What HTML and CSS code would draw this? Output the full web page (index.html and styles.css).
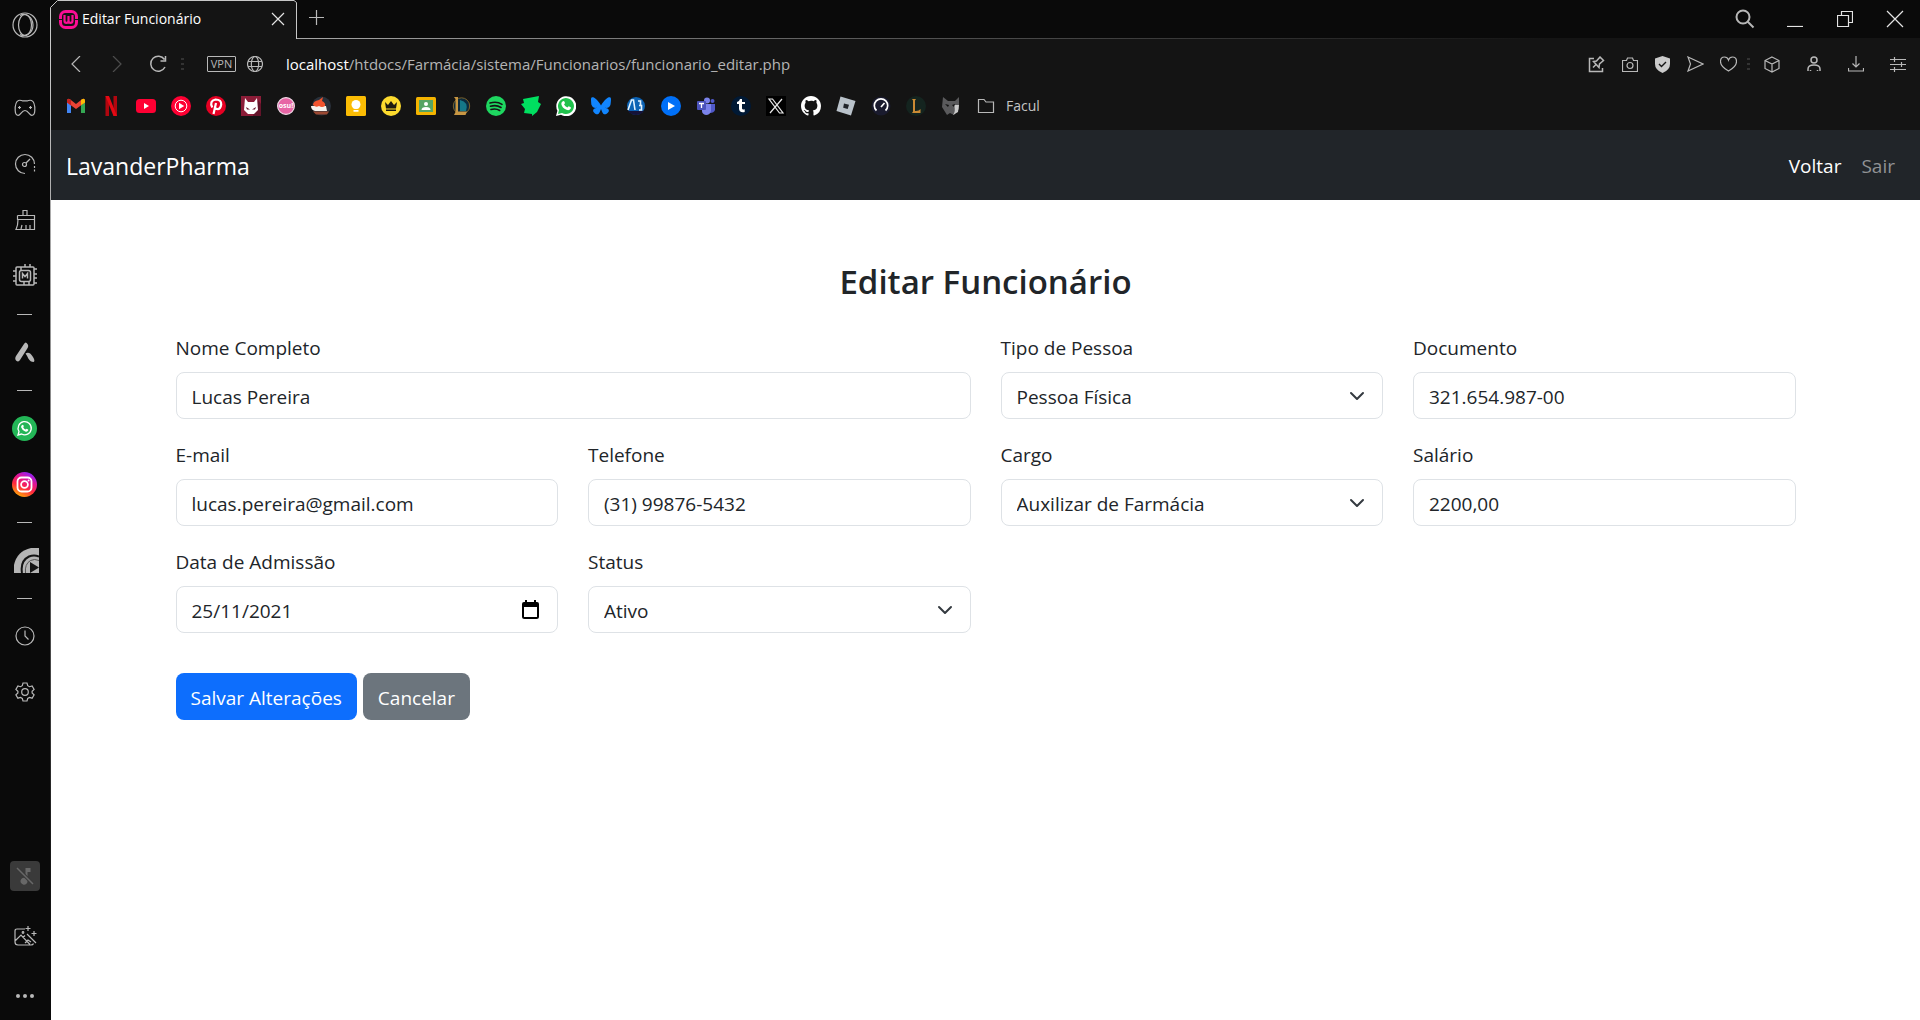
FILE: index.html
```html
<!DOCTYPE html>
<html lang="pt-BR">
<head>
<meta charset="utf-8">
<meta name="viewport" content="width=device-width, initial-scale=1">
<title>Editar Funcionário</title>
<link rel="stylesheet" href="styles.css">
</head>
<body>
<div class="browser">
  <aside class="sidebar">
    <button class="side-logo" aria-label="Opera"><svg width="26" height="26" viewBox="0 0 26 26" class="line"><circle cx="13" cy="13" r="12"/><ellipse cx="13" cy="13" rx="6.500" ry="10.500"/><path d="M8 3.500c5-3 13 1 13 9.500s-8 12.500-13 9.500"/></svg></button>
    <nav class="side-main" aria-label="Barra lateral">
      <button class="side-btn" aria-label="Jogos"><svg width="22" height="18" viewBox="0 0 22 18" class="line"><path d="M4.500 1.500c2-.8 3 .3 4 .3h5c1 0 2-1.100 4-.3 2.500 1 3.500 5 3.300 10-.1 3-1.300 4.800-3 4.800-2.300 0-3.300-4.800-6.800-4.800s-4.500 4.800-6.800 4.800c-1.700 0-2.900-1.800-3-4.800-.2-5 .8-9 3.300-10z"/><path d="M5.500 7v3M4 8.500h3M15 8.500h3M16.500 7v3"/></svg></button>
      <button class="side-btn" aria-label="Limitadores"><svg width="22" height="22" viewBox="0 0 22 22" class="line"><path d="M11 20.500A9.500 9.500 0 1 1 20.500 11"/><circle cx="10.500" cy="11.500" r="2"/><path d="m12 10 4-4"/><path d="M20.500 13v7" stroke-dasharray="2 1.500"/></svg></button>
      <button class="side-btn" aria-label="Limpeza"><svg width="22" height="22" viewBox="0 0 22 22" class="line"><path d="M9 6.500V1.500h4v5M3.500 6.500h17V20.500H2q2-4 2-10M3.500 6.500v4h17M7 20l1-4M12 20v-4M16 20v-4"/></svg></button>
      <button class="side-btn" aria-label="Mods"><svg width="24" height="24" viewBox="0 0 24 24" class="line thicker"><rect x="3" y="3" width="18" height="18" rx="1"/><rect x="6.500" y="6.500" width="11" height="11" rx="2"/><path d="M9.500 14.500v-5l2.500 3 2.500-3v5M8 3v3M12 0v3M17 0v3M16 18v3M11 18v3M0 7h3M0 12h3M0 17h3M21 5h3M21 10h3M21 14h3M21 19h3"/></svg></button>
      <span class="side-dash"></span>
      <button class="side-btn" aria-label="Aria"><svg width="20" height="20" viewBox="0 0 20 20" class="solid"><path d="M9 2q1.800-3 3.500 0 1.500 2-.2 4.500L5 18q-1.500 2.500-4 .5-1.500-2 0-4.500zM10.500 11.500q4-2.500 7.500 3.500 2.500 4 .5 5-3 0-5.200-3.500-1-2.500-2.800-5z"/></svg></button>
      <span class="side-dash"></span>
      <button class="side-btn" aria-label="WhatsApp"><svg width="25" height="25" viewBox="0 0 25 25"><circle cx="12.500" cy="12.500" r="12.500" fill="#23b657"/><path d="m6 19 1-3.500a6.600 6.600 0 1 1 2.600 2.500z" fill="none" stroke="#fff" stroke-width="1.300"/><path d="M9.800 9.300q1.300-1.500 1.900.6.200.8-.5 1.300.8 1.600 2.500 2.400l.9-.8q2.200.7 1.700 1.500-1 1.900-3 1.200-3.300-1.200-4.200-4.200-.2-1.200.7-2z" fill="#fff"/></svg></button>
      <button class="side-btn" aria-label="Instagram"><svg width="25" height="25" viewBox="0 0 25 25"><defs><linearGradient id="ig" x1=".2" y1="1" x2=".7" y2="0"><stop offset="0" stop-color="#ffb900"/><stop offset=".4" stop-color="#ff2a3d"/><stop offset=".7" stop-color="#e01594"/><stop offset="1" stop-color="#8a22ff"/></linearGradient></defs><circle cx="12.500" cy="12.500" r="12.500" fill="url(#ig)"/><g fill="none" stroke="#fff" stroke-width="1.800"><rect x="5.500" y="5.500" width="14" height="14" rx="4"/><circle cx="12.500" cy="12.500" r="3.400"/></g><circle cx="16.600" cy="8.400" r="1" fill="#fff"/></svg></button>
      <span class="side-dash"></span>
      <button class="side-btn player" aria-label="Player"><svg width="25" height="25" viewBox="0 0 25 25"><path d="M0 25V17Q3 3 17 0h8v25z" fill="#b5b5b5"/><path d="M8 25Q6 13 15 8.500q5-2 10 0" fill="none" stroke="#141414" stroke-width="2"/><path d="M11.500 25q-1-9 5-12.500 4-2 8.500 0" fill="none" stroke="#555" stroke-width="1"/><path d="M16 14v11l9-5.500z" fill="#141414"/></svg></button>
      <span class="side-dash"></span>
      <button class="side-btn" aria-label="Histórico"><svg width="20" height="20" viewBox="0 0 20 20" class="line"><circle cx="10" cy="10" r="9"/><path d="M10 4.500V10l3.500 3.500"/></svg></button>
      <button class="side-btn" aria-label="Configurações"><svg width="20" height="20" viewBox="0 0 20 20" class="line"><circle cx="10" cy="10" r="3.300"/><path d="M8 1h4l.7 2.700 1.800 1 2.600-.8 2 3.500-2 1.800v1.800l2 1.800-2 3.400-2.600-.7-1.800 1L12 19H8l-.7-2.500-1.800-1-2.600.7-2-3.400 2-1.800V9.200l-2-1.800 2-3.500 2.600.8 1.800-1z"/></svg></button>
    </nav>
    <div class="side-bottom">
      <button class="side-tool muted" aria-label="Música desligada"><svg width="18" height="18" viewBox="0 0 18 18"><path d="M9.500 12V1h5v4h-3v9a3.500 3.500 0 1 1-2-3z" fill="#686868"/><path d="m1 1 16 16" stroke="#3a3a3a" stroke-width="3.500"/><path d="m1 1 16 16" stroke="#686868" stroke-width="1.500"/></svg></button>
      <button class="side-tool" aria-label="Papel de parede"><svg width="24" height="22" viewBox="0 0 24 22" class="line"><path d="M12 4H4Q2 4 2 6v11q0 3 3 3h13q2 0 2.500-1.500M2 16l6-6 9 9.500M10 12.500l2-2M12 18l3-3 3 2M14 9l9 9"/><circle cx="10" cy="7.500" r=".8"/><path d="M15 1v5M12.500 3.500h5M21 6v5M18.500 8.500h5"/></svg></button>
      <button class="side-tool" aria-label="Mais"><svg width="18" height="4" viewBox="0 0 18 4" class="solid"><circle cx="2" cy="2" r="2"/><circle cx="9" cy="2" r="2"/><circle cx="16" cy="2" r="2"/></svg></button>
    </div>
  </aside>

  <div class="window">
    <header class="tabstrip">
      <div class="tab">
        <svg class="tab-outline" width="248" height="39" viewBox="0 0 248 39"><path d="M.5 39V7.500l7-7H244l2.500 2V39" fill="#141414" stroke="#c8c8c8"/></svg>
        <svg class="tab-icon" width="19" height="19" viewBox="0 0 19 19"><rect x="1.500" y="1.500" width="16" height="16" rx="5" fill="none" stroke="#fb0d94" stroke-width="3"/><path d="M0 9.500h3M16 9.500h3" stroke="#141414"/><path d="M5.500 5v6q0 1.800 2 1.800t2-1.800V6M9.500 11q0 1.800 2 1.800t2-1.800V5" fill="none" stroke="#fb0d94" stroke-width="2.200"/></svg>
        <span class="tab-title">Editar Funcionário</span>
        <button class="tab-close" aria-label="Fechar aba"><svg width="14" height="14" viewBox="0 0 14 14" class="line bright"><path d="m1 1 12 12M13 1 1 13"/></svg></button>
      </div>
      <button class="new-tab" aria-label="Nova aba"><svg width="15" height="15" viewBox="0 0 15 15" class="line"><path d="M7.500 0v15M0 7.500h15"/></svg></button>
      <div class="window-buttons">
        <button aria-label="Pesquisar"><svg width="20" height="20" viewBox="0 0 20 20" class="line thick"><circle cx="8" cy="8" r="6.500"/><path d="m12.500 12.500 6 6"/></svg></button>
        <button aria-label="Minimizar"><svg width="16" height="16" viewBox="0 0 16 16" class="line bright"><path d="M0 15.500h16"/></svg></button>
        <button aria-label="Restaurar"><svg width="16" height="16" viewBox="0 0 16 16" class="line bright"><path d="M.5 4.500h11v11H.5zM4.500 4.500v-4h11v11h-4"/></svg></button>
        <button aria-label="Fechar"><svg width="18" height="18" viewBox="0 0 18 18" class="line bright"><path d="m1 1 16 16M17 1 1 17"/></svg></button>
      </div>
    </header>

    <div class="toolbar">
      <button class="nav-btn" aria-label="Voltar página"><svg width="10" height="16" viewBox="0 0 10 16" class="line"><path d="M9 0 1 8l8 8"/></svg></button>
      <button class="nav-btn dim" aria-label="Avançar"><svg width="10" height="16" viewBox="0 0 10 16" class="line"><path d="m1 0 8 8-8 8"/></svg></button>
      <button class="nav-btn" aria-label="Recarregar"><svg width="18" height="18" viewBox="0 0 18 18" class="line thicker"><path d="M15.500 4.500A7.500 7.500 0 1 0 16 12M16.500 1v5h-5"/></svg></button>
      <span class="dots"></span>
      <span class="vpn">VPN</span>
      <svg class="globe line" width="16" height="16" viewBox="0 0 16 16"><circle cx="8" cy="8" r="7.500"/><ellipse cx="8" cy="8" rx="3.700" ry="7.500"/><path d="M1 5.500h14M1 10.500h14"/></svg>
      <p class="url"><b>localhost</b>/htdocs/Farmácia/sistema/Funcionarios/funcionario_editar.php</p>
      <button class="act-btn" aria-label="Fixar"><svg width="17" height="17" viewBox="0 0 17 17" class="line thicker"><path d="M6 2.500H1.500v13h13V12M5 11.500l3-3M5.500 5.500l5.500 6 .5-3.500 4-3.500L12 1 8.500 5z"/></svg></button>
      <button class="act-btn" aria-label="Captura"><svg width="16" height="15" viewBox="0 0 16 15" class="line"><path d="M.5 3.500h4l1-2.500h5l1 2.500h4v11H.5z"/><circle cx="8" cy="8.500" r="3"/></svg></button>
      <button class="act-btn" aria-label="Proteção"><svg width="15" height="17" viewBox="0 0 15 17"><path d="M7.500 0 15 2.500V8q0 6-7.500 9Q0 14 0 8V2.500z" fill="#cbcbcb"/><path d="m4 8 2.500 2.500L11 6" fill="none" stroke="#141414" stroke-width="1.400"/></svg></button>
      <button class="act-btn" aria-label="Enviar"><svg width="17" height="16" viewBox="0 0 17 16" class="line"><path d="m1 1 15 7L1 15l2.500-7z"/></svg></button>
      <button class="act-btn" aria-label="Favoritar"><svg width="17" height="16" viewBox="0 0 17 16" class="line"><path d="M8.500 15Q.5 10.500.5 5.500.5 1 4.500 1q3 0 4 3 1-3 4-3 4 0 4 4.500 0 5-8 9.500z"/></svg></button>
      <span class="dots narrow"></span>
      <button class="menu-btn" aria-label="Extensões"><svg width="16" height="17" viewBox="0 0 16 17" class="line"><path d="m8 1 7 3.500v8L8 16l-7-3.500v-8zM1 4.500 8 8l7-3.500M8 8v8"/></svg></button>
      <button class="menu-btn" aria-label="Perfil"><svg width="14" height="16" viewBox="0 0 14 16" class="line thicker"><circle cx="7" cy="4" r="3"/><path d="M1 15v-2q0-4 6-4t6 4v2M3.500 15v-1M10.500 15v-1"/></svg></button>
      <button class="menu-btn" aria-label="Downloads"><svg width="16" height="16" viewBox="0 0 16 16" class="line"><path d="M8 0v11M4.500 7.500 8 11l3.500-3.500M.5 12v3h15v-3"/></svg></button>
      <button class="menu-btn" aria-label="Configuração rápida"><svg width="16" height="16" viewBox="0 0 16 16" class="line"><path d="M0 3.500h16M0 8.500h16M0 13.500h16M4.500 1v5M11.500 6v5M4.500 11v5"/></svg></button>
    </div>

    <nav class="bookmarks" aria-label="Favoritos">
      <a href="#" aria-label="Gmail"><svg viewBox="0 0 20 20"><path d="M1 4.500V17h4V9z" fill="#4285f4"/><path d="M19 4.500V17h-4V9z" fill="#34a853"/><path d="M1 5q0-3 3-1.800L10 8l6-4.800Q19 2 19 5v1.500L10 13 1 6.500z" fill="#ea4335"/><path d="M15 4v5l4-2.500V5q0-3-3-1.800z" fill="#fbbc04"/><path d="M1 5v1.500L5 9.500V4Q1 1.500 1 5z" fill="#c5221f"/></svg></a>
      <a href="#" aria-label="Netflix"><svg viewBox="0 0 20 20"><path d="M4.500 0H8v20H4.500zM12.500 0H16v20h-3.500z" fill="#b1060f"/><path d="M4.500 0H8l8 20h-3.500z" fill="#e50914"/></svg></a>
      <a href="#" aria-label="YouTube"><svg viewBox="0 0 20 20"><rect y="3" width="20" height="14" rx="3.500" fill="#ff0033"/><path d="M8 7v6l5-3z" fill="#fff"/></svg></a>
      <a href="#" aria-label="YouTube Music"><svg viewBox="0 0 20 20"><circle cx="10" cy="10" r="10" fill="#ff0033"/><circle cx="10" cy="10" r="5.800" fill="none" stroke="#fff"/><path d="M8 6.800v6.400l5.200-3.200z" fill="#fff"/></svg></a>
      <a href="#" aria-label="Pinterest"><svg viewBox="0 0 20 20"><circle cx="10" cy="10" r="10" fill="#e60023"/><path d="M6.300 11.500Q3 5 9.500 3.500q6 0 5.700 5-.7 5-4.200 4.500-1.500-.3-1.600-1.400M10 7 7.500 18" fill="none" stroke="#fff" stroke-width="2.200"/></svg></a>
      <a href="#" aria-label="Gato"><svg viewBox="0 0 20 20"><path d="M0 0h20v20H0z" fill="#8c1d38"/><path d="m17 4 3 4v12h-8z" fill="#64142a"/><path d="m4 2 3 4h6l3-4 1 12-4 4H7l-4-4z" fill="#fff"/><path d="m5 11 4 2.500H6zM15 11l-4 2.500h3z" fill="#64142a"/></svg></a>
      <a href="#" aria-label="osu!"><svg viewBox="0 0 20 20"><circle cx="10" cy="10" r="8.400" fill="#e765a5" stroke="#eedae5" stroke-width="1.200"/><text x="10" y="12" class="osu">osu!</text></svg></a>
      <a href="#" aria-label="Receitas"><svg viewBox="0 0 20 20"><circle cx="10.500" cy="10" r="9.500" fill="#29303a"/><path d="M0 10h15l1 5H4q-4-1-4-5z" fill="#f5f2ee"/><path d="M2 9q0-4 6-5l4-3-1 4q4 2 3 5-3 2-6 0-3 2-6-1z" fill="#f0532e"/><path d="M2 15.500h16l-2 3H5z" fill="#9c4932"/></svg></a>
      <a href="#" aria-label="Google Keep"><svg viewBox="0 0 20 20"><rect width="20" height="20" rx="1.500" fill="#fbbc04"/><circle cx="10" cy="8.500" r="4.500" fill="#fff"/><path d="M7.500 10h5v2.500h-5zM7.500 14h5v1.700h-5z" fill="#fff"/></svg></a>
      <a href="#" aria-label="Coroa"><svg viewBox="0 0 20 20"><circle cx="10" cy="10" r="10" fill="#fddb2e"/><path d="m4 6 3 3 3-4 3 4 3-3-1 6.500H5zM5 13.500h10v1.500H5z" fill="#1c1a10"/></svg></a>
      <a href="#" aria-label="Google Classroom"><svg viewBox="0 0 20 20"><rect y="1" width="20" height="18" rx="1.500" fill="#f4b400"/><path d="M3 4h14v12H3z" fill="#57a464"/><circle cx="10" cy="8" r="2" fill="#fff"/><path d="M5.500 14q0-3 4.500-3t4.500 3z" fill="#fff"/></svg></a>
      <a href="#" aria-label="League of Legends"><svg viewBox="0 0 20 20"><circle cx="10.500" cy="10" r="8.200" fill="#0c2b3d" stroke="#7c6129"/><path d="M9 4q9 2 6 11H9z" fill="#157887"/><path d="M3 1h4v14.500h9L14.500 19H3l1.500-3V3z" fill="#c79643"/></svg></a>
      <a href="#" aria-label="Spotify"><svg viewBox="0 0 20 20"><circle cx="10" cy="10" r="10" fill="#1ed760"/><path d="M4 7q7-2 12 1.300M4.500 10.300q6-1.700 10.500 1.200M5 13.500q5-1.300 8.700 1" fill="none" stroke="#141414" stroke-width="1.600" stroke-linecap="round"/></svg></a>
      <a href="#" aria-label="Deezer"><svg viewBox="0 0 20 20"><path d="m2 3 16-3-1 6 3 2-4 8-5 4v-2l-8-1 1-4-4-5 3-1z" fill="#00e060"/></svg></a>
      <a href="#" aria-label="WhatsApp Web"><svg viewBox="0 0 20 20"><path d="m0 20 1.400-5.200A10 10 0 1 1 5 18.700z" fill="#fff"/><path d="m2 18 1-4a8 8 0 1 1 3 3z" fill="#1fc14c"/><path d="M6.500 5.500q1.800-1.300 2.400 1.300.1.900-.9 1.700 1.200 2 3.400 3l1.200-1.200q3 .8 2.200 2.200-1.600 2.500-4.300 1.300-4.500-1.800-5.200-5.800 0-1.700 1.200-2.500z" fill="#fff"/></svg></a>
      <a href="#" aria-label="Bluesky"><svg viewBox="0 0 20 20"><path d="M4.300 2.500C6.600 4.200 9 7.500 10 9.500c1-2 3.400-5.300 5.700-7 1.700-1.200 4.300-2.200 4.300.9 0 .7-.3 5-.6 5.700-.8 2.500-3 3.100-5.300 2.700 3.900.7 4.800 2.900 2.700 5-4 4.100-5.700-1-6.200-2.300L10 13l-.6 1.500C8.900 15.800 7.200 20.900 3.200 16.800c-2.100-2.100-1.200-4.300 2.700-5-2.300.4-4.500-.2-5.300-2.700C.3 8.400 0 4.100 0 3.400 0 .3 2.600 1.300 4.300 2.500z" fill="#1185fe"/></svg></a>
      <a href="#" aria-label="Animes"><svg viewBox="0 0 20 20"><circle cx="10" cy="10" r="9" fill="#0c63b5"/><path d="M2 15h16q-3 4-8 4t-8-4z" fill="#151238"/><path d="m2 14 3.500-10h2L9 14M12 5h2.500v4M13 9.500h2.500V14H13" fill="none" stroke="#e3f3ff" stroke-width="1.600"/></svg></a>
      <a href="#" aria-label="Player"><svg viewBox="0 0 20 20"><circle cx="10" cy="10" r="10" fill="#0070f8"/><path d="M7 6v8l7-4z" fill="#fff"/></svg></a>
      <a href="#" aria-label="Teams"><svg viewBox="0 0 20 20"><circle cx="11" cy="4.500" r="3" fill="#7b83eb"/><circle cx="16.500" cy="5" r="2" fill="#5059c9"/><path d="M14 8h5v6q-1 3-5 3z" fill="#5059c9"/><path d="M6 8h9v7q-1 4-5 4-4-1-4-4z" fill="#7b83eb"/><rect x="1" y="5" width="9" height="9" rx="1" fill="#4b53bc"/><path d="M3 7.500h5M5.500 7.500V12" stroke="#fff" stroke-width="1.300"/></svg></a>
      <a href="#" aria-label="Tumblr"><svg viewBox="0 0 20 20"><circle cx="10" cy="10" r="10" fill="#001935"/><path d="M8 8H6V6q2.500-.7 3-3h2v3h3v2h-3v4.500q.3 1.700 2.700.8V16Q8 17 8 12.500z" fill="#fff"/></svg></a>
      <a href="#" aria-label="X"><svg viewBox="0 0 20 20"><path d="M0 0h20v20H0z" fill="#000"/><path d="M3 3h3.500L17 17h-3.500zM16 3 4 17" fill="none" stroke="#e8e8e8" stroke-width="1.200"/></svg></a>
      <a href="#" aria-label="GitHub"><svg viewBox="0 0 16 16"><path fill="#fff" d="M8 0C3.580 0 0 3.580 0 8c0 3.540 2.290 6.530 5.470 7.590.4.070.55-.17.55-.38 0-.19-.01-.82-.01-1.490-2.010.37-2.530-.49-2.690-.94-.09-.23-.48-.94-.82-1.130-.28-.15-.68-.52-.01-.53.63-.01 1.080.58 1.230.82.72 1.210 1.870.87 2.330.66.07-.52.28-.87.51-1.070-1.780-.2-3.640-.89-3.640-3.950 0-.87.31-1.590.82-2.150-.08-.2-.36-1.020.08-2.120 0 0 .67-.21 2.200.82A7.600 7.600 0 0 1 8 3.860c.68 0 1.360.09 2 .27 1.530-1.040 2.200-.82 2.200-.82.44 1.100.16 1.920.08 2.120.51.56.82 1.270.82 2.150 0 3.070-1.870 3.750-3.650 3.950.29.25.54.73.54 1.480 0 1.070-.01 1.930-.01 2.200 0 .21.15.46.55.38A8 8 0 0 0 16 8c0-4.420-3.580-8-8-8z"/></svg></a>
      <a href="#" aria-label="Roblox"><svg viewBox="0 0 20 20"><path d="m4.500.5 15 4.500-4.500 14.500L.5 15z" fill="#b9c2ca"/><path d="m8 7.500 5 1.300L11.700 13l-4.500-1.200z" fill="#20242a"/></svg></a>
      <a href="#" aria-label="Speedtest"><svg viewBox="0 0 20 20"><circle cx="10" cy="10" r="9.500" fill="#1a1b2e"/><path d="M5.500 14.500a6.700 6.700 0 1 1 9 0M10 11l3.500-4" fill="none" stroke="#fff" stroke-width="1.700"/></svg></a>
      <a href="#" aria-label="Lolzinho"><svg viewBox="0 0 20 20"><circle cx="10" cy="10" r="10" fill="#14241f"/><path d="M6 3h4L9 4.500V15q4 .3 5.500-2v4H6l1-1.500v-11z" fill="#c98a34"/></svg></a>
      <a href="#" aria-label="Lobo"><svg viewBox="0 0 20 20"><path d="m2 1 5 4h7l4-4v12l-5 6-4-2-3 2-5-8z" fill="#5a5a5c"/><path d="M13 9h5l-1 7-5 3q3-4 1-10z" fill="#c9c9c9"/><path d="m4 8 4 1-1 2zM11 9l3-1-1 3z" fill="#111"/></svg></a>
      <a href="#" class="folder"><svg viewBox="0 0 20 20" class="line"><path d="M2.500 3.500H8l2 2.500h7.500v10.500h-15z"/></svg><span>Facul</span></a>
    </nav>

    <div class="page">
      <header class="navbar">
        <a href="#" class="brand">LavanderPharma</a>
        <nav class="navbar-links" aria-label="Navegação">
          <a href="#" class="active">Voltar</a>
          <a href="#">Sair</a>
        </nav>
      </header>
      <main class="container">
        <h2>Editar Funcionário</h2>
        <form>
          <div class="fields">
            <div class="field wide"><label for="nome">Nome Completo</label><input id="nome" type="text" value="Lucas Pereira"></div>
            <div class="field"><label for="tipo">Tipo de Pessoa</label><select id="tipo"><option>Pessoa Física</option><option>Pessoa Jurídica</option></select></div>
            <div class="field"><label for="documento">Documento</label><input id="documento" type="text" value="321.654.987-00"></div>
            <div class="field"><label for="email">E-mail</label><input id="email" type="email" value="lucas.pereira@gmail.com"></div>
            <div class="field"><label for="telefone">Telefone</label><input id="telefone" type="text" value="(31) 99876-5432"></div>
            <div class="field"><label for="cargo">Cargo</label><select id="cargo"><option>Auxilizar de Farmácia</option></select></div>
            <div class="field"><label for="salario">Salário</label><input id="salario" type="text" value="2200,00"></div>
            <div class="field"><label for="admissao">Data de Admissão</label>
              <div class="date"><input id="admissao" type="text" inputmode="numeric" value="25/11/2021"><button type="button" aria-label="Abrir calendário"><svg width="17" height="19" viewBox="0 0 17 19"><path d="M1 4v12.500q0 1.500 1.500 1.500h12q1.500 0 1.500-1.500V4" fill="none" stroke="#000" stroke-width="2"/><path d="M0 7V4q0-2 2-2h1V0h2v2h7V0h2v2h1q2 0 2 2v3z"/><path d="M2 7h13v10H2z" fill="#fff"/></svg></button></div></div>
            <div class="field"><label for="status">Status</label><select id="status"><option>Ativo</option><option>Inativo</option></select></div>
          </div>
          <div class="actions">
            <button type="submit" class="btn primary">Salvar Alterações</button>
            <button type="button" class="btn secondary">Cancelar</button>
          </div>
        </form>
      </main>
    </div>
  </div>
</div>
</body>
</html>
```
FILE: styles.css
```css
*, *::before, *::after { box-sizing: border-box; }

body {
  margin: 0;
  font-family: "Segoe UI", "Open Sans", "Noto Sans", sans-serif;
  font-size: 19px;
  line-height: 30px;
  color: #212529;
  background: #fff;
}

button {
  padding: 0;
  border: 0;
  background: none;
  font: inherit;
  color: inherit;
}

svg { display: block; flex: none; }
a { text-decoration: none; color: inherit; }

.line { fill: none; stroke: #b8b8b8; stroke-width: 1.2; }
.thicker { stroke-width: 1.5; }
.thick { stroke-width: 2; }
.bright { stroke: #e4e4e4; }
.solid { fill: #b8b8b8; }

.browser {
  display: grid;
  grid-template-columns: 51px 1fr;
  min-height: 100vh;
}

/* Sidebar */
.sidebar {
  position: relative;
  display: flex;
  flex-direction: column;
  padding-right: 2px;
  background: #0a0a0a;
}

.sidebar::after {
  content: "";
  position: absolute;
  inset: 8px 0 0 auto;
  width: 1px;
  background: linear-gradient(#d0d0d0, #888 40%, #1a1a1a 82%, #0a0a0a);
}

.side-logo, .side-btn, .side-tool {
  display: grid;
  place-items: center;
}

.side-logo { height: 50px; }
.side-main { display: flex; flex-direction: column; padding-top: 30px; }
.side-btn { height: 56px; }
.player { padding-left: 3px; }
.side-dash { height: 20px; display: grid; place-items: center; }
.side-dash::before { content: ""; width: 15px; height: 1px; background: #b8b8b8; }

.side-bottom {
  margin-top: auto;
  display: flex;
  flex-direction: column;
  align-items: center;
  gap: 30px;
  padding-bottom: 9px;
}

.side-tool { width: 30px; height: 30px; }
.muted { background: #3a3a3a; border-radius: 4px; }

/* Browser chrome */
.window {
  display: flex;
  flex-direction: column;
  min-width: 0;
}

.tabstrip {
  display: flex;
  height: 39px;
  background: linear-gradient(90deg, #c8c8c8, #555 45%, #141414 80%) bottom / 100% 1px no-repeat #0a0a0a;
}

.tab {
  position: relative;
  display: flex;
  align-items: center;
  width: 246px;
  height: 38px;
  padding: 0 12px 0 8px;
}

.tab-outline { position: absolute; left: -1px; top: 0; }
.tab-icon, .tab-title, .tab-close { position: relative; }
.tab-title { margin-left: 4px; font-size: 14px; color: #fff; line-height: 38px; }
.tab-close { margin-left: auto; }
.new-tab { width: 38px; padding-left: 12px; height: 35px; }

.window-buttons { display: flex; margin-left: auto; }
.window-buttons button { width: 50px; height: 38px; display: grid; place-items: center; }

.toolbar {
  display: flex;
  align-items: center;
  height: 50px;
  padding: 0 1px 0 4px;
  background: #141414;
}

.nav-btn, .act-btn, .menu-btn { display: grid; place-items: center; height: 40px; }
.nav-btn { width: 41px; }
.act-btn { width: 33px; }
.menu-btn { width: 42px; }
.dim { opacity: 0.35; }

.dots {
  width: 8px;
  height: 12px;
  background: repeating-linear-gradient(#333 0 2px, transparent 2px 5px) center / 3px 12px no-repeat;
}

.dots.narrow { width: 6px; }

.vpn {
  width: 29px;
  height: 16px;
  margin: 0 11px 0 21px;
  border: 1px solid #b8b8b8;
  border-radius: 1px;
  color: #b8b8b8;
  font-size: 11px;
  line-height: 14px;
  text-align: center;
}

.url {
  flex: 1;
  min-width: 0;
  margin: 0 0 0 23px;
  font-size: 15px;
  color: #b4b4b4;
  white-space: nowrap;
  overflow: hidden;
}

.url b { font-weight: 400; color: #fff; }

.bookmarks {
  display: flex;
  align-items: center;
  gap: 15px;
  height: 41px;
  padding: 0 15px 7px;
  background: #141414;
}

.bookmarks a, .bookmarks svg { height: 20px; }
.bookmarks svg { width: 20px; }

.folder {
  display: flex;
  align-items: center;
  gap: 10px;
  font-size: 14px;
  color: #c4c4c4;
}

.osu { font-size: 7px; font-weight: 700; fill: #fff; text-anchor: middle; }

/* Application page */
.page { flex: 1; background: #fff; }

.navbar {
  display: flex;
  align-items: center;
  justify-content: space-between;
  height: 70px;
  padding: 2px 25px 0 15px;
  background: #212529;
  color: #fff;
}

.brand { font-size: 23px; }
.navbar-links { display: flex; gap: 20px; color: #909294; }
.navbar-links .active { color: #fff; }

.container {
  max-width: 1650px;
  margin: 0 auto;
  padding: 58px 15px;
}

h2 {
  margin: 0 0 26px;
  font-size: 33px;
  font-weight: 600;
  line-height: 48px;
  text-align: center;
}

.fields {
  display: grid;
  grid-template-columns: repeat(4, 1fr);
  gap: 20px 30px;
}

.field { min-width: 0; }
.wide { grid-column: span 2; }
.field label { display: block; margin-bottom: 8px; line-height: 32px; }

.field input, .field select {
  display: block;
  width: 100%;
  height: 47px;
  padding: 2px 15px 0;
  border: 1px solid #dee2e6;
  border-radius: 8px;
  background: #fff;
  color: #212529;
  font: inherit;
}

.field select {
  appearance: none;
  background: url("data:image/svg+xml,%3Csvg xmlns='http://www.w3.org/2000/svg' viewBox='0 0 16 16'%3E%3Cpath fill='none' stroke='%23343a40' stroke-linecap='round' stroke-linejoin='round' stroke-width='2' d='m2 5 6 6 6-6'/%3E%3C/svg%3E") right 17px center / 16px 16px no-repeat #fff;
}

.date { position: relative; }
.date button { position: absolute; right: 19px; top: 14px; }

.actions {
  display: flex;
  gap: 6px;
  margin-top: 40px;
}

.btn {
  height: 47px;
  padding: 2px 15px 0;
  border-radius: 8px;
  color: #fff;
}

.primary { background: #0d6efd; }
.secondary { background: #6c757d; }

@media (max-width: 900px) {
  .fields { grid-template-columns: 1fr 1fr; }
}
```
